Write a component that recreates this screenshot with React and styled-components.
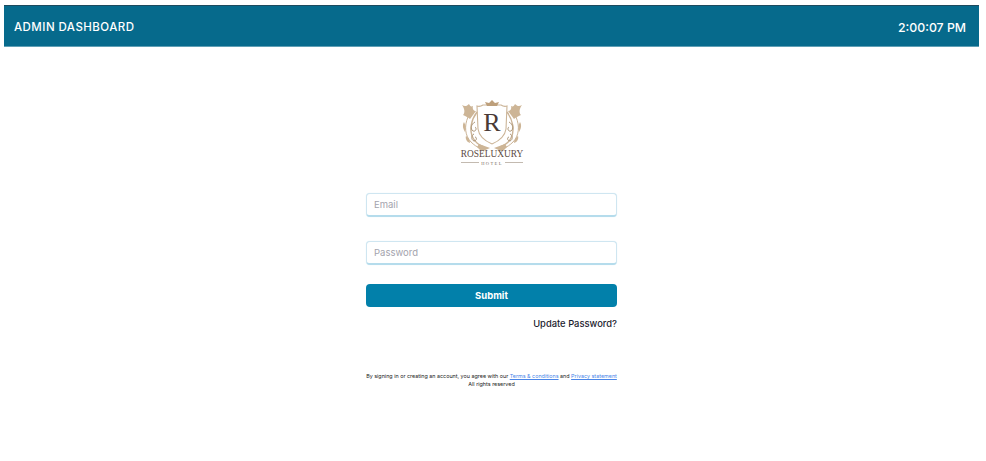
import React from 'react'
import styled, { createGlobalStyle } from 'styled-components'

const GlobalStyle = createGlobalStyle`
body {
    margin: 0;
    background: #fff;
    font-family: "Inter", "Liberation Sans", sans-serif;
}
`

const Page = styled.div`
width: 986px;
height: 461px;
padding: 5px 7px 0 4px;
box-sizing: border-box;
display: flex;
flex-direction: column;
overflow: hidden;
`

const Header = styled.header`
height: 42px;
flex-shrink: 0;
box-sizing: border-box;
background: #066a8c;
border-top: 1px solid #1d4a5e;
border-bottom: 1px solid #5f9fb5;
display: flex;
align-items: center;
justify-content: space-between;
padding: 2px 13px 0 10px;
color: #fff;
`

const Title = styled.div`
font-size: 11.5px;
font-weight: 500;
letter-spacing: 0.45px;
`

const Clock = styled.div`
font-size: 12.3px;
font-weight: 500;
`

const Main = styled.main`
display: flex;
flex-direction: column;
align-items: center;
padding-top: 51px;
`

const LogoWrap = styled.div`
width: 70px;
height: 70px;
margin-bottom: 25px;
`

const Form = styled.form`
width: 251px;
display: flex;
flex-direction: column;
`

const Input = styled.input`
height: 24px;
width: 100%;
box-sizing: border-box;
padding: 0 7px;
margin-bottom: 24px;
font-family: "Inter", sans-serif;
font-size: 9.5px;
background: #fff;
border: 1px solid #cfe6f1;
border-bottom: 2px solid #b5dcec;
border-radius: 4px;
box-shadow: 0 0 1px #cfe7f2;

&::placeholder {
    color: #a3a3ad;
    opacity: 1;
}
`

const Submit = styled.button`
height: 23px;
margin-top: -5px;
width: 100%;
border: none;
border-radius: 4px;
background: #0280aa;
color: #fff;
font-family: "Inter", sans-serif;
font-size: 9.5px;
font-weight: 700;
`

const UpdateLink = styled.div`
margin-top: 10px;
text-align: right;
font-size: 9.4px;
font-weight: 500;
line-height: 13px;
color: #1c1c2e;
`

const Legal = styled.div`
margin-top: 42px;
width: 251px;
text-align: center;
font-size: 5.4px;
line-height: 8px;
color: #222;
white-space: nowrap;
`

const LegalLink = styled.span`
color: #4a86e8;
text-decoration: underline;
`

// one half of the crest, mirrored for the other side
const CrestSide = ({ mirror }) => (
    <g transform={mirror ? 'translate(70,0) scale(-1,1)' : undefined}>
        <g fill="none" stroke="#cbb497" strokeWidth="1.4">
            <path d="M20 14 C14 22 12 32 16 40 C18 44 22 47 27 49" />
            <path d="M11 19 C7 28 8 38 14 44 C17 47 20 49 23 50" strokeWidth="1" />
            <path d="M18 24 C14 26 13 31 16 33 C19 34 20 30 18 29" stroke="#a58c6d" strokeWidth="0.9" />
            <path d="M17 36 C14 37 14 42 17 43 C20 43 20 39 18 39" stroke="#a58c6d" strokeWidth="0.9" />
        </g>
        <g fill="#cdb596">
            <path d="M5 7 C8 9 10 8 12 6 C13 8 14 9 16 8 C15 11 17 13 19 13 C17 16 15 18 13 21 C11 19 8 18 6 17 C8 15 8 11 5 7 Z" />
            <path d="M7 24 C9 27 9 31 8 34 C6 31 5 27 7 24 Z" />
            <path d="M9 38 C11 39 13 42 13 45 C10 44 8 41 9 38 Z" />
            <path d="M22 46 L33 50 L26 53 Q22 52 20 49 Z" />
        </g>
        <path d="M35 7 H26 Q23 9 20 8 L21 31 C22 38 28 43 35 46" fill="none" stroke="#cbb497" strokeWidth="1.1" />
    </g>
)

const LogoSvg = styled.svg`
display: block;
overflow: visible;
`

const Logo = () => (
    <LogoSvg width="70" height="70" viewBox="0 0 70 70">
        <CrestSide />
        <CrestSide mirror />
        <path d="M35 2 L38 5 L42 4 L40 8 H30 L28 4 L32 5 Z" fill="#bd9f7b" />
        <text x="35" y="33" textAnchor="middle" fontFamily="Liberation Serif" fontSize="26" fill="#4a3a36">R</text>
        <text x="35" y="59" textAnchor="middle" fontFamily="Liberation Serif" fontSize="9.4" fill="#5b4a42">ROSELUXURY</text>
        <text x="35" y="67" textAnchor="middle" fontFamily="Liberation Serif" fontSize="4.5" letterSpacing="1.4" fill="#7a6a60">HOTEL</text>
        <path d="M4 64.5 H22 M48 64.5 H66" stroke="#b4a89c" strokeWidth="0.8" />
    </LogoSvg>
)

const App = () => {
    return (
        <Page>
            <GlobalStyle />
            <Header>
                <Title>ADMIN DASHBOARD</Title>
                <Clock>2:00:07 PM</Clock>
            </Header>
            <Main>
                <LogoWrap>
                    <Logo />
                </LogoWrap>
                <Form>
                    <Input type="text" placeholder="Email" />
                    <Input type="password" placeholder="Password" />
                    <Submit type="button">Submit</Submit>
                    <UpdateLink>Update Password?</UpdateLink>
                </Form>
                <Legal>
                    By signing in or creating an account, you agree with our <LegalLink>Terms &amp; conditions</LegalLink> and <LegalLink>Privacy statement</LegalLink>
                    <br />
                    All rights reserved
                </Legal>
            </Main>
        </Page>
    )
}

export default App
